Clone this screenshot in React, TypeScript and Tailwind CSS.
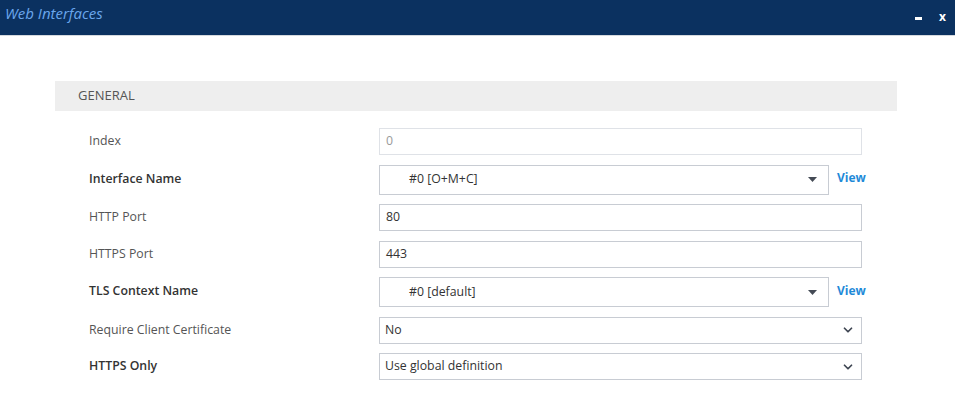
import { ChevronDown } from "lucide-react";

type Row = {
  label: string;
  bold?: boolean;
  kind: "input" | "disabled" | "combo" | "select";
  value: string;
};

const rows: Row[] = [
  { label: "Index", kind: "disabled", value: "0" },
  { label: "Interface Name", bold: true, kind: "combo", value: "#0 [O+M+C]" },
  { label: "HTTP Port", kind: "input", value: "80" },
  { label: "HTTPS Port", kind: "input", value: "443" },
  { label: "TLS Context Name", bold: true, kind: "combo", value: "#0 [default]" },
  { label: "Require Client Certificate", kind: "select", value: "No" },
  { label: "HTTPS Only", bold: true, kind: "select", value: "Use global definition" },
];

function Field({ row }: { row: Row }) {
  if (row.kind === "combo") {
    return (
      <div className="flex items-center">
        <div className="flex items-center h-[30px] w-[450px] border border-[#c8ccd3] bg-white pl-[29px] pr-[10px] text-[#333]">
          <span className="flex-1">{row.value}</span>
          <svg width="9" height="5" viewBox="0 0 9 5" className="mr-[1px]">
            <path d="M0 0h9L4.5 5z" fill="#444b55" />
          </svg>
        </div>
        <a className="ml-[8px] text-[12px] font-bold text-[#1f8ad8] -mt-[3px]">View</a>
      </div>
    );
  }
  if (row.kind === "select") {
    return (
      <div className="flex items-center h-[27px] w-[483px] border border-[#c8ccd3] bg-white pl-[5px] pr-[6px] text-[#333]">
        <span className="flex-1">{row.value}</span>
        <ChevronDown size={14} strokeWidth={3} color="#3f4652" />
      </div>
    );
  }
  const disabled = row.kind === "disabled";
  return (
    <div
      className={`flex items-center h-[27px] w-[483px] border bg-white pl-[6px] ${
        disabled ? "border-[#dfe2e7] text-[#9a9a9a]" : "border-[#c8ccd3] text-[#333]"
      }`}
    >
      {row.value}
    </div>
  );
}

export default function App() {
  return (
    <div className="w-[955px] h-[395px] bg-white overflow-hidden" style={{ fontFamily: '"Open Sans", sans-serif' }}>
      <div className="flex items-center h-[36px] bg-[#0b3160] border-b border-[#d5d9de]">
        <span className="ml-[5px] -mt-[9px] text-[15px] italic text-[#6aa6ec]">Web Interfaces</span>
        <div className="flex-1" />
        <div className="w-[7px] h-[3px] bg-white mr-[17px] mt-[1px]" />
        <span className="mr-[9px] -mt-[1px] text-[12px] font-bold text-white">x</span>
      </div>

      <div className="pt-[45px] pl-[55px]">
        <div className="w-[842px]">
          <div className="flex items-center h-[30px] bg-[#eeeeee] pl-[23px] text-[13px] text-[#555]">GENERAL</div>
          <div className="flex flex-col gap-[9.5px] mt-[17px] text-[12.3px]">
            {rows.map((row) => (
              <div key={row.label} className="flex items-center">
                <div
                  className={`w-[324px] pl-[34px] ${
                    row.bold ? "font-semibold text-[#333]" : "text-[#555]"
                  } ${row.kind === "combo" ? "-mt-[1px]" : ""}`}
                >
                  {row.label}
                </div>
                <Field row={row} />
              </div>
            ))}
          </div>
        </div>
      </div>
    </div>
  );
}
